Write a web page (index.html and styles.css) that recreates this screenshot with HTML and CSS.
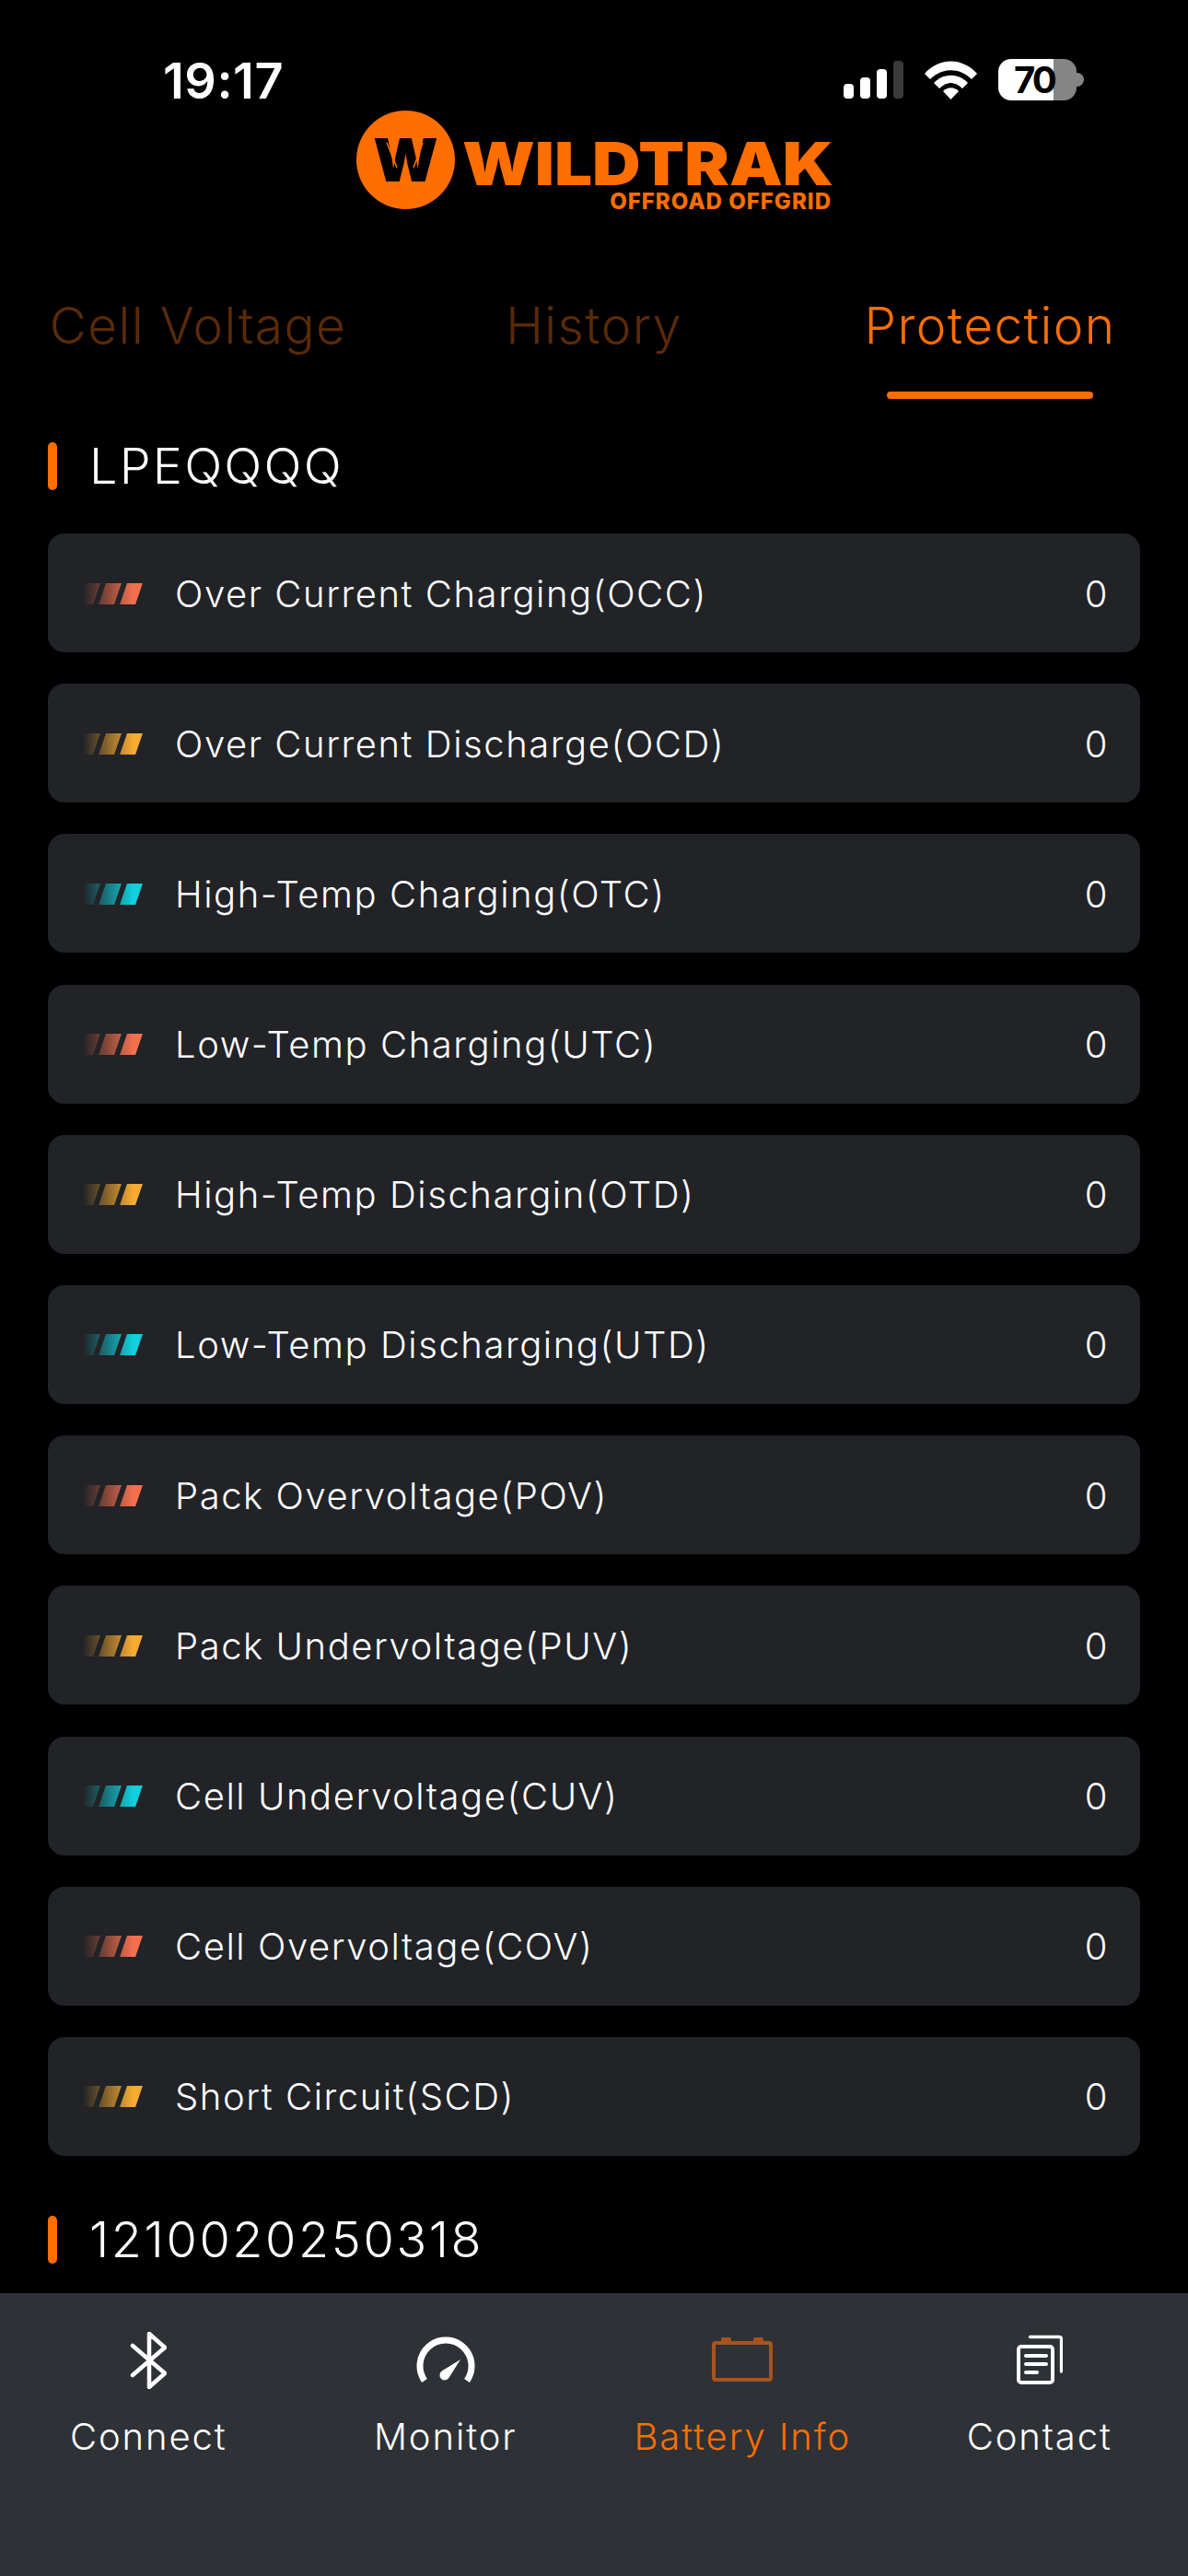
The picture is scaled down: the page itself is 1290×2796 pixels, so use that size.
FILE: index.html
```html
<!DOCTYPE html>
<html lang="en">
<head>
	<meta charset="UTF-8">
	<meta name="viewport" content="width=device-width,initial-scale=1.0">
	<title>Wildtrak</title>
	<link rel="stylesheet" href="styles.css">
</head>
<body>
	<div class="screen">
		<div class="content">
			<!-- status bar -->
			<div class="status-bar">
				<span class="time">19:17</span>
				<div class="status-icons">
					<svg class="signal" width="65" height="41" viewBox="0 0 65 41">
						<rect x="0" y="25" width="11" height="16" rx="4" fill="#fff"/>
						<rect x="18" y="18" width="11" height="23" rx="4" fill="#fff"/>
						<rect x="36" y="9" width="11" height="32" rx="4" fill="#fff"/>
						<rect x="54" y="0" width="11" height="41" rx="4" fill="#3a3a3a"/>
					</svg>
					<svg class="wifi" width="57" height="42" viewBox="0 0 57 42">
						<path d="M0 14 C16 -4 41 -4 57 14 L51 20 C38 7 19 7 6 20 Z" fill="#fff"/>
						<path d="M10 24 C20 13 37 13 47 24 L41 30 C33 22 24 22 16 30 Z" fill="#fff"/>
						<path d="M20 33 C25 28 32 28 37 33 L28.500 42 Z" fill="#fff"/>
					</svg>
					<div class="battery">
						<div class="battery-body"><span class="battery-text">70</span></div>
						<div class="battery-nub"></div>
					</div>
				</div>
			</div>

			<!-- logo -->
			<div class="logo">
				<div class="logo-mark">
					<span>W</span>
					<svg class="logo-slits" width="107" height="107" viewBox="0 0 107 107" stroke="#ff6e00" stroke-width="1.500">
						<path d="M33 35 L44 62 M72 35 L62 62"/>
					</svg>
				</div>
				<div class="logo-words">
					<div class="logo-name"><span>WILDTRAK</span></div>
					<div class="logo-sub">OFFROAD OFFGRID</div>
				</div>
			</div>

			<!-- tabs -->
			<div class="tabs">
				<div class="tab">Cell Voltage</div>
				<div class="tab">History</div>
				<div class="tab active">Protection</div>
			</div>

			<div class="section-title"><i></i>LPEQQQQ</div>

			<div class="list">
				<div class="row red"><span class="stripes"><b></b><b></b><b></b></span><span class="name">Over Current Charging(OCC)</span><span class="num">0</span></div>
				<div class="row amber"><span class="stripes"><b></b><b></b><b></b></span><span class="name">Over Current Discharge(OCD)</span><span class="num">0</span></div>
				<div class="row cyan"><span class="stripes"><b></b><b></b><b></b></span><span class="name">High-Temp Charging(OTC)</span><span class="num">0</span></div>
				<div class="row red"><span class="stripes"><b></b><b></b><b></b></span><span class="name">Low-Temp Charging(UTC)</span><span class="num">0</span></div>
				<div class="row amber"><span class="stripes"><b></b><b></b><b></b></span><span class="name">High-Temp Dischargin(OTD)</span><span class="num">0</span></div>
				<div class="row cyan"><span class="stripes"><b></b><b></b><b></b></span><span class="name">Low-Temp Discharging(UTD)</span><span class="num">0</span></div>
				<div class="row red"><span class="stripes"><b></b><b></b><b></b></span><span class="name">Pack Overvoltage(POV)</span><span class="num">0</span></div>
				<div class="row amber"><span class="stripes"><b></b><b></b><b></b></span><span class="name">Pack Undervoltage(PUV)</span><span class="num">0</span></div>
				<div class="row cyan"><span class="stripes"><b></b><b></b><b></b></span><span class="name">Cell Undervoltage(CUV)</span><span class="num">0</span></div>
				<div class="row red"><span class="stripes"><b></b><b></b><b></b></span><span class="name">Cell Overvoltage(COV)</span><span class="num">0</span></div>
				<div class="row amber"><span class="stripes"><b></b><b></b><b></b></span><span class="name">Short Circuit(SCD)</span><span class="num">0</span></div>
			</div>

			<div class="section-title second"><i></i>1210020250318</div>
		</div>

		<!-- bottom nav -->
		<div class="nav">
			<div class="nav-item">
				<svg width="40" height="62" viewBox="0 0 40 62" fill="none" stroke="#fff" stroke-width="4.500" stroke-linecap="round" stroke-linejoin="round">
					<path d="M3 15 L38 45 L21 60 L21 2 L38 17 L3 47"/>
				</svg>
				<span>Connect</span>
			</div>
			<div class="nav-item">
				<svg width="64" height="62" viewBox="0 0 64 62" fill="none">
					<path d="M9 53 A28 28 0 1 1 55 53" stroke="#fff" stroke-width="7"/>
					<path d="M48 30 L36 49 A5.500 5.500 0 1 1 28.500 42 Z" fill="#fff"/>
				</svg>
				<span>Monitor</span>
			</div>
			<div class="nav-item active">
				<svg width="66" height="62" viewBox="0 0 66 62" fill="none">
					<rect x="2" y="12" width="62" height="40" rx="2" stroke="#a9531c" stroke-width="4"/>
					<rect x="10" y="6" width="11" height="7" rx="2" fill="#a9531c"/>
					<rect x="45" y="6" width="11" height="7" rx="2" fill="#a9531c"/>
				</svg>
				<span>Battery Info</span>
			</div>
			<div class="nav-item">
				<svg width="50" height="62" viewBox="0 0 50 62" fill="none" stroke="#fff" stroke-linecap="round">
					<path d="M14.500 5.500 H46 Q48.500 5.500 48.500 8 V43" stroke-width="3.300"/>
					<rect x="2" y="16" width="37" height="39" rx="3" stroke-width="4"/>
					<path d="M10 26 H32 M10 35 H32 M10 44 H22" stroke-width="4"/>
				</svg>
				<span>Contact</span>
			</div>
		</div>
	</div>
</body>
</html>
```

FILE: styles.css
```css
* {
	box-sizing: border-box;
}
body {
	margin: 0;
	background-color: #000;
	color: #fff;
	font-family: Inter, "Noto Sans", sans-serif;
}
.screen {
	width: 1290px;
	height: 2796px;
	display: flex;
	flex-direction: column;
	overflow: hidden;
}
.content {
	flex: 1;
}

/* status bar */
.status-bar {
	height: 120px;
	padding: 61px 113px 0 177px;
	display: flex;
	justify-content: space-between;
	align-items: flex-start;
}
.time {
	font-size: 54px;
	line-height: 54px;
	font-weight: 600;
	letter-spacing: 0.5px;
}
.status-icons {
	display: flex;
	align-items: center;
	margin-top: 3px;
}
.wifi {
	margin-left: 23px;
}
.battery {
	margin-left: 23px;
	display: flex;
	align-items: center;
}
.battery-body {
	width: 85px;
	height: 45px;
	padding-left: 17px;
	border-radius: 14px;
	background: linear-gradient(to right, #fff 60px, #858585 60px);
}
.battery-text {
	display: block;
	color: #000;
	font-size: 40px;
	line-height: 45px;
	font-weight: 700;
	letter-spacing: -3px;
}
.battery-nub {
	width: 8px;
	height: 15px;
	border-radius: 0 8px 8px 0;
	background-color: #858585;
}

/* logo */
.logo {
	height: 107px;
	padding-left: 387px;
	display: flex;
	color: #ff6e00;
}
.logo-mark {
	position: relative;
	width: 107px;
	height: 107px;
	border-radius: 50%;
	background-color: #ff6e00;
	color: #000;
	display: flex;
	align-items: center;
	justify-content: center;
}
.logo-mark span {
	font-size: 65px;
	line-height: 65px;
	font-weight: 900;
}
.logo-slits {
	position: absolute;
	left: 0;
	top: 0;
}
.logo-words {
	margin-left: 8px;
	width: 401px;
}
.logo-name {
	margin-top: 34px;
	height: 47px;
	font-size: 65px;
	line-height: 47px;
	font-weight: 900;
}
.logo-name span {
	display: inline-block;
	transform: scaleX(1.12);
	transform-origin: left center;
}
.logo-sub {
	margin-top: 9px;
	height: 17px;
	text-align: right;
	font-size: 24px;
	line-height: 17px;
	font-weight: 800;
	letter-spacing: 1px;
}

/* tabs */
.tabs {
	display: grid;
	grid-template-columns: repeat(3, 1fr);
	height: 206px;
}
.tab {
	padding-top: 76px;
	text-align: center;
	font-size: 55px;
	line-height: 100px;
	font-weight: 300;
	letter-spacing: 1.400px;
	color: #5a2a08;
}
.tab.active {
	color: #ff6e00;
}
.tab.active::after {
	content: "";
	display: block;
	width: 224px;
	height: 8px;
	margin: 22px auto 0;
	border-radius: 4px;
	background-color: #ff6e00;
}

/* sections */
.section-title {
	margin-top: 47px;
	padding-left: 52px;
	height: 52px;
	display: flex;
	align-items: center;
	font-size: 54px;
	line-height: 54px;
	font-weight: 300;
	letter-spacing: 2.200px;
}
.section-title i {
	width: 10px;
	height: 52px;
	border-radius: 5px;
	background-color: #ff6e00;
	margin-right: 35px;
}
.section-title.second {
	margin-top: 65px;
	letter-spacing: 2.600px;
}

/* rows */
.list {
	margin: 47px 52px 0;
	display: flex;
	flex-direction: column;
	gap: 34.200px;
}
.row {
	height: 129px;
	padding: 1px 34px 0 32px;
	border-radius: 18px;
	background-color: #212327;
	display: flex;
	align-items: center;
	font-size: 40px;
	font-weight: 300;
	letter-spacing: 1.550px;
}
.name {
	flex: 1;
}
.stripes {
	width: 71px;
	height: 23px;
	padding-left: 4px;
	margin-right: 35px;
	display: flex;
	gap: 6px;
	-webkit-mask-image: linear-gradient(to right, transparent 8%, #000 85%);
	mask-image: linear-gradient(to right, transparent 8%, #000 85%);
}
.stripes b {
	width: 17px;
	height: 23px;
	transform: skewX(-19deg);
}
.red .stripes b {
	background-color: #f3704f;
}
.amber .stripes b {
	background-color: #f7ab33;
}
.cyan .stripes b {
	background-color: #12cfdd;
}

/* bottom nav */
.nav {
	height: 307px;
	background-color: #2e3136;
	display: grid;
	grid-template-columns: repeat(4, 1fr);
}
.nav-item {
	padding-top: 42px;
	display: flex;
	flex-direction: column;
	align-items: center;
	font-size: 40px;
	font-weight: 300;
	letter-spacing: 1.900px;
}
.nav-item span {
	margin-top: 28px;
	line-height: 48px;
}
.nav-item.active {
	color: #ff6e00;
}
```
